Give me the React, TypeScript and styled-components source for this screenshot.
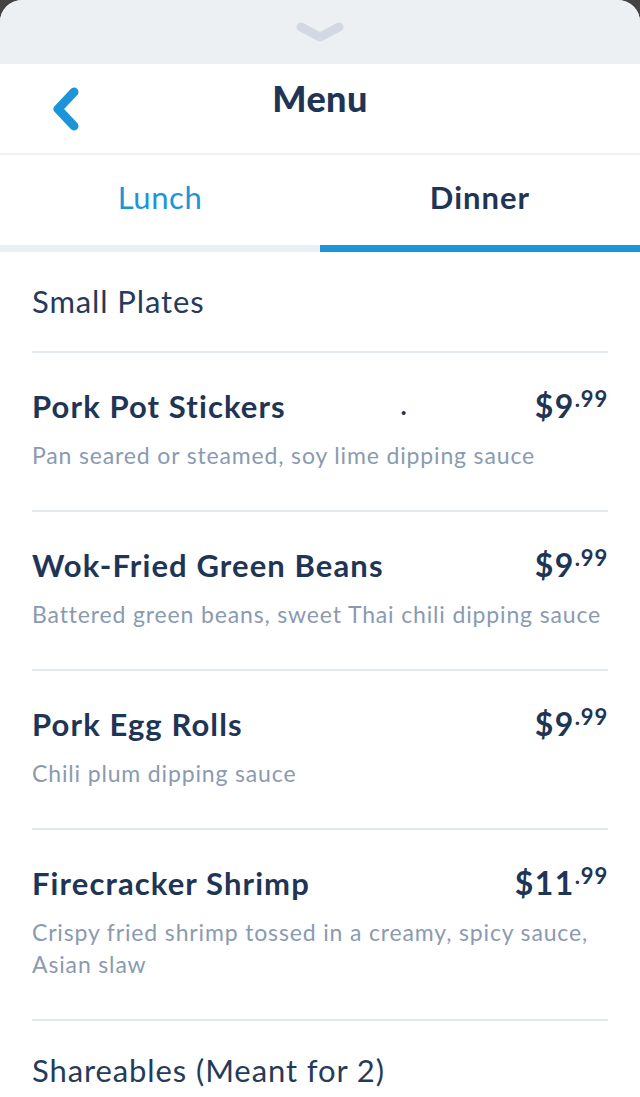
import React from "react";
import styled, { createGlobalStyle } from "styled-components";

const GlobalStyle = createGlobalStyle`
  html, body {
    margin: 0;
    padding: 0;
    background: #434343;
  }
  body {
    font-family: Lato, "Open Sans", "Liberation Sans", sans-serif;
    -webkit-font-smoothing: antialiased;
  }
`;

const Sheet = styled.div`
  width: 640px;
  min-height: 1097px;
  background: #ffffff;
  border-radius: 22px 22px 0 0;
  overflow: hidden;
`;

const Grabber = styled.div`
  height: 64px;
  background: #ecf0f3;
  display: flex;
  justify-content: center;
  padding-top: 22px;
  box-sizing: border-box;
`;

const NavBar = styled.div`
  height: 89px;
  display: grid;
  grid-template-columns: 100px 1fr 100px;
  align-items: center;
  border-bottom: 2px solid #eef2f5;
`;

const BackButton = styled.button`
  border: 0;
  background: none;
  padding: 0 0 0 51px;
  height: 100%;
  display: flex;
  align-items: center;
  cursor: pointer;
`;

const Title = styled.h1`
  margin: 0;
  text-align: center;
  font-size: 36px;
  font-weight: 900;
  color: #1f3555;
  letter-spacing: 0.4px;
  padding-bottom: 22px;
`;

const Tabs = styled.div`
  display: grid;
  grid-template-columns: 1fr 1fr;
`;

const Tab = styled.button<{ $active?: boolean }>`
  border: 0;
  background: none;
  height: 97px;
  padding: 0 0 6px;
  font-family: inherit;
  font-size: 31px;
  font-weight: ${({ $active }) => ($active ? 700 : 400)};
  letter-spacing: ${({ $active }) => ($active ? "1px" : "0.6px")};
  color: ${({ $active }) => ($active ? "#1f3555" : "#1b95d8")};
  border-bottom: 7px solid ${({ $active }) => ($active ? "#1b95d8" : "#eaeff3")};
  cursor: pointer;
`;

const List = styled.div`
  padding: 0 32px;
`;

const SectionTitle = styled.div<{ $last?: boolean }>`
  font-size: 31px;
  line-height: 34px;
  letter-spacing: 0.9px;
  color: #253b5a;
  padding: 32px 0 33px;
  border-bottom: 2px solid ${({ $last }) => ($last ? "transparent" : "#e3e9f0")};
`;

const Item = styled.div`
  padding: 36px 0 39px;
  border-bottom: 2px solid #e3e9f0;
`;

const ItemHead = styled.div`
  display: flex;
  align-items: flex-start;
  height: 34px;
  margin-bottom: 16px;
`;

const ItemName = styled.div`
  font-size: 31px;
  line-height: 34px;
  font-weight: 700;
  letter-spacing: 1.1px;
  color: #1f3555;
`;

const StrayDot = styled.span<{ $offset: number }>`
  margin-left: ${({ $offset }) => $offset}px;
  font-size: 24px;
  line-height: 34px;
  font-weight: 900;
  color: #1f3555;
`;

const Price = styled.div`
  margin-left: auto;
  display: flex;
  align-items: flex-start;
  color: #1f3555;
  font-weight: 700;
`;

const Dollars = styled.span`
  font-size: 32px;
  line-height: 34px;
  letter-spacing: 1.5px;
`;

const Cents = styled.span`
  font-size: 22px;
  line-height: 22px;
  letter-spacing: 0.8px;
  margin-top: -1px;
`;

const Desc = styled.div`
  font-size: 23px;
  line-height: 32px;
  letter-spacing: 0.85px;
  color: #8a9ab0;
`;

type MenuItem = { name: string; desc: string; dollars: string; cents: string; dot?: number };

const items: MenuItem[] = [
  { name: "Pork Pot Stickers", desc: "Pan seared or steamed, soy lime dipping sauce", dollars: "$9", cents: ".99", dot: 115 },
  { name: "Wok-Fried Green Beans", desc: "Battered green beans, sweet Thai chili dipping sauce", dollars: "$9", cents: ".99" },
  { name: "Pork Egg Rolls", desc: "Chili plum dipping sauce", dollars: "$9", cents: ".99" },
  { name: "Firecracker Shrimp", desc: "Crispy fried shrimp tossed in a creamy, spicy sauce, Asian slaw", dollars: "$11", cents: ".99" },
];

export default function App() {
  return (
    <>
      <GlobalStyle />
      <Sheet>
        <Grabber>
          <svg width="48" height="22" viewBox="0 0 48 22">
            <path d="M5 5 L24 15 L43 5" fill="none" stroke="#d3d9e2" strokeWidth="9" strokeLinecap="round" strokeLinejoin="round" />
          </svg>
        </Grabber>
        <NavBar>
          <BackButton aria-label="Back">
            <svg width="30" height="46" viewBox="0 0 30 46">
              <path d="M23 6 L7 23 L23 40" fill="none" stroke="#1b95d8" strokeWidth="9" strokeLinecap="round" strokeLinejoin="round" />
            </svg>
          </BackButton>
          <Title>Menu</Title>
          <div />
        </NavBar>
        <Tabs>
          <Tab>Lunch</Tab>
          <Tab $active>Dinner</Tab>
        </Tabs>
        <List>
          <SectionTitle>Small Plates</SectionTitle>
          {items.map((it) => (
            <Item key={it.name}>
              <ItemHead>
                <ItemName>{it.name}</ItemName>
                {it.dot !== undefined && <StrayDot $offset={it.dot}>.</StrayDot>}
                <Price>
                  <Dollars>{it.dollars}</Dollars>
                  <Cents>{it.cents}</Cents>
                </Price>
              </ItemHead>
              <Desc>{it.desc}</Desc>
            </Item>
          ))}
          <SectionTitle $last>Shareables (Meant for 2)</SectionTitle>
        </List>
      </Sheet>
    </>
  );
}
